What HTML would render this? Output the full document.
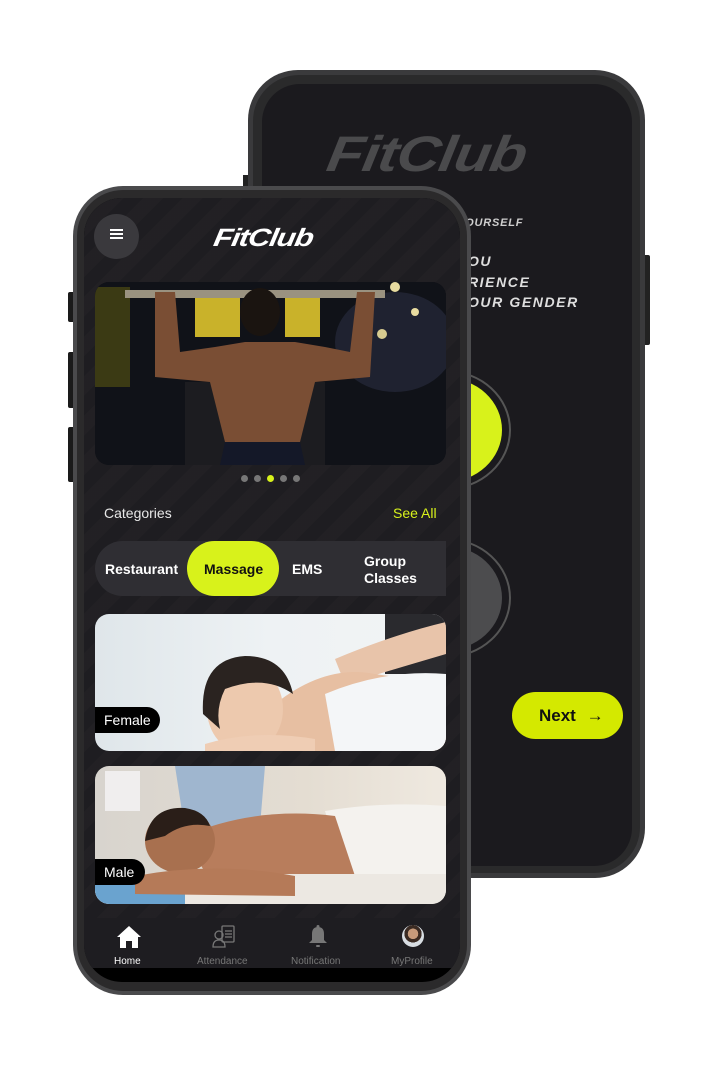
<!DOCTYPE html>
<html><head><meta charset="utf-8">
<style>
*{margin:0;padding:0;box-sizing:border-box}
body{width:728px;height:1072px;background:#fff;position:relative;overflow:hidden;font-family:"Liberation Sans",Arial,sans-serif}
.abs{position:absolute}
.logo{font-family:"Liberation Sans",sans-serif;font-weight:bold;font-style:italic;letter-spacing:-1px;white-space:nowrap;transform-origin:0 0}
</style></head><body>

<!-- BACK PHONE -->
<div class="abs" style="left:645px;top:255px;width:5px;height:90px;background:#222;border-radius:0 2px 2px 0"></div>
<div class="abs" style="left:243px;top:175px;width:6px;height:12px;background:#222"></div>
<div class="abs" style="left:248px;top:70px;width:397px;height:808px;background:#3a3a3c;border-radius:50px;"></div>
<div class="abs" style="left:253px;top:75px;width:387px;height:798px;background:#2a2a2b;border-radius:46px;"></div>
<div class="abs" style="left:262px;top:84px;width:370px;height:782px;background:#1b1a1e;border-radius:38px;overflow:hidden">
  <div class="abs logo" style="left:70px;top:45px;font-size:50px;line-height:50px;color:#4a4a4c;transform:scaleX(1.2) skewX(-8deg)">FitClub</div>
  <div class="abs logo" style="left:195px;top:133px;font-size:11px;color:#cfcfcf;letter-spacing:0.8px">YOURSELF</div>
  <div class="abs logo" style="left:195px;top:167px;font-size:14px;color:#dedede;line-height:20.5px;letter-spacing:1.6px">YOU<br>ERIENCE<br>YOUR GENDER</div>
  <div class="abs" style="left:119px;top:286px;width:130px;height:120px;border-radius:50%;border:2px solid #555;"></div>
  <div class="abs" style="left:128px;top:294px;width:112px;height:104px;border-radius:50%;background:#d8f21b"></div>
  <div class="abs" style="left:119px;top:454px;width:130px;height:120px;border-radius:50%;border:2px solid #555;"></div>
  <div class="abs" style="left:128px;top:462px;width:112px;height:104px;border-radius:50%;background:#4c4c4e"></div>
  <div class="abs" style="left:250px;top:608px;width:111px;height:47px;border-radius:24px;background:#d4e900;color:#111;font-weight:bold;font-size:17px;line-height:47px;padding-left:27px">Next <span style="font-weight:normal;margin-left:6px">→</span></div>
</div>

<!-- FRONT PHONE -->
<div class="abs" style="left:68px;top:292px;width:6px;height:30px;background:#1a1a1a;border-radius:2px 0 0 2px"></div>
<div class="abs" style="left:68px;top:352px;width:6px;height:56px;background:#1a1a1a;border-radius:2px 0 0 2px"></div>
<div class="abs" style="left:68px;top:427px;width:6px;height:55px;background:#1a1a1a;border-radius:2px 0 0 2px"></div>
<div class="abs" style="left:73px;top:186px;width:398px;height:809px;background:#4a4a4c;border-radius:50px;"></div>
<div class="abs" style="left:77px;top:190px;width:390px;height:801px;background:#2b2a2b;border-radius:46px;"></div>
<div class="abs" style="left:84px;top:198px;width:376px;height:784px;background:#000;border-radius:38px;overflow:hidden">
 <div class="abs" style="left:0;top:0;width:376px;height:770px;background:#1e1d21 repeating-linear-gradient(135deg,rgba(255,255,255,0) 0 14px,rgba(255,255,255,0.015) 14px 28px)"></div>
 <div class="abs" style="left:10px;top:16px;width:45px;height:45px;border-radius:50%;background:#3a393d"></div>
 <div class="abs" style="left:26px;top:35px;width:13px;height:2px;background:#fff;box-shadow:0 4px 0 #fff,0 -4px 0 #fff"></div>
 <div class="abs logo" style="left:132px;top:28px;font-size:25px;line-height:25px;color:#fff;transform:scaleX(1.25) skewX(-8deg)">FitClub</div>

 <!-- banner -->
 <div class="abs" style="left:11px;top:84px;width:351px;height:183px;border-radius:14px;overflow:hidden;background:#0d0e14">
  <svg width="351" height="183" viewBox="0 0 351 183">
   <rect width="351" height="183" fill="#101218"/>
   <ellipse cx="300" cy="60" rx="60" ry="50" fill="#1f2230"/>
   <rect x="0" y="5" width="35" height="100" fill="#3b3a14"/>
   <rect x="100" y="10" width="45" height="45" fill="#c9b22a"/>
   <rect x="190" y="10" width="35" height="45" fill="#c9b22a"/>
   <rect x="30" y="8" width="260" height="8" fill="#9a9280"/>
   <circle cx="300" cy="5" r="5" fill="#e8dca0"/><circle cx="320" cy="30" r="4" fill="#e8dca0"/><circle cx="287" cy="52" r="5" fill="#d8cc90"/>
   <rect x="90" y="100" width="140" height="83" fill="#1c1c20"/>
   <path d="M60 10 L80 10 L85 70 L120 65 L150 60 L200 60 L230 65 L255 70 L262 10 L280 10 L275 95 L220 100 L205 160 L130 160 L115 100 L60 95 Z" fill="#7a4e34"/>
   <ellipse cx="165" cy="30" rx="20" ry="24" fill="#1a1410"/>
   <path d="M130 160 L205 160 L210 183 L125 183 Z" fill="#141828"/>
  </svg>
 </div>
 <!-- dots -->
 <div class="abs" style="left:157px;top:277px;width:7px;height:7px;border-radius:50%;background:#777"></div>
 <div class="abs" style="left:170px;top:277px;width:7px;height:7px;border-radius:50%;background:#777"></div>
 <div class="abs" style="left:183px;top:277px;width:7px;height:7px;border-radius:50%;background:#d8f21b"></div>
 <div class="abs" style="left:196px;top:277px;width:7px;height:7px;border-radius:50%;background:#777"></div>
 <div class="abs" style="left:209px;top:277px;width:7px;height:7px;border-radius:50%;background:#777"></div>

 <div class="abs" style="left:20px;top:307px;font-size:14px;color:#e8e8e8">Categories</div>
 <div class="abs" style="left:309px;top:307px;font-size:14px;color:#d8f21b">See All</div>

 <div class="abs" style="left:11px;top:343px;width:351px;height:55px;border-radius:28px 0 0 28px;background:#2f2e33"></div>
 <div class="abs" style="left:103px;top:343px;width:92px;height:55px;border-radius:28px;background:#d8f21b"></div>
 <div class="abs" style="left:21px;top:363px;font-size:14px;font-weight:bold;color:#fff">Restaurant</div>
 <div class="abs" style="left:120px;top:363px;font-size:14px;font-weight:bold;color:#111">Massage</div>
 <div class="abs" style="left:208px;top:363px;font-size:14px;font-weight:bold;color:#fff">EMS</div>
 <div class="abs" style="left:280px;top:355px;font-size:14px;font-weight:bold;color:#fff;line-height:17px">Group<br>Classes</div>

 <!-- female card -->
 <div class="abs" style="left:11px;top:416px;width:351px;height:137px;border-radius:14px;overflow:hidden;background:linear-gradient(90deg,#dfe6ea,#eef2f4 50%,#f2f4f5)">
  <svg width="351" height="137" viewBox="0 0 351 137">
   <rect x="290" y="0" width="61" height="60" fill="#2a2a2e"/>
   <path d="M240 45 Q300 20 351 8 L351 40 Q300 55 250 70 Z" fill="#e8c4aa"/>
   <path d="M180 90 Q230 50 280 60 L351 70 L351 137 L140 137 Z" fill="#e7bfa2"/>
   <path d="M230 80 Q290 55 351 60 L351 137 L240 137 Z" fill="#f4f6f8"/>
   <ellipse cx="150" cy="95" rx="38" ry="44" fill="#edc9ae"/>
   <path d="M108 100 Q105 45 150 42 Q190 42 198 80 Q170 60 130 75 Q120 95 125 115 Z" fill="#2a2320"/>
   <path d="M110 130 Q160 115 220 125 L220 137 L110 137 Z" fill="#efcdb4"/>
  </svg>
  <div class="abs" style="left:0;top:93px;width:65px;height:26px;border-radius:0 13px 13px 0;background:#000;color:#fff;font-size:14px;line-height:26px;padding-left:9px">Female</div>
 </div>

 <!-- male card -->
 <div class="abs" style="left:11px;top:568px;width:351px;height:138px;border-radius:14px;overflow:hidden;background:linear-gradient(90deg,#d8d4ce,#e4ddd2 60%,#efe9e0)">
  <svg width="351" height="138" viewBox="0 0 351 138">
   <rect x="10" y="5" width="35" height="40" fill="#f0eeee"/>
   <path d="M80 0 L170 0 L165 60 L90 65 Z" fill="#9fb6cf"/>
   <path d="M230 45 Q290 35 351 40 L351 110 L250 110 Z" fill="#f4f2ee"/>
   <path d="M90 70 Q160 40 240 50 L260 110 L120 125 Z" fill="#b87d5c"/>
   <rect x="0" y="108" width="351" height="30" fill="#ece8e2"/>
   <rect x="0" y="118" width="90" height="20" fill="#6aa3cf"/>
   <ellipse cx="85" cy="75" rx="35" ry="32" fill="#a8704f"/>
   <path d="M50 75 Q55 40 90 42 Q110 45 115 60 Q90 55 70 70 Z" fill="#2a1e18"/>
   <path d="M40 110 Q120 95 200 110 L200 130 L40 128 Z" fill="#b57a58"/>
  </svg>
  <div class="abs" style="left:0;top:93px;width:50px;height:26px;border-radius:0 13px 13px 0;background:#000;color:#fff;font-size:14px;line-height:26px;padding-left:9px">Male</div>
 </div>

 <!-- bottom nav -->
 <div class="abs" style="left:0;top:720px;width:376px;height:50px;background:#1e1d21"></div>
 <svg class="abs" style="left:32px;top:727px" width="26" height="24" viewBox="0 0 26 24"><path d="M13 1 L25 12 L22 12 L22 23 L16 23 L16 16 L10 16 L10 23 L4 23 L4 12 L1 12 Z" fill="#fff"/></svg>
 <svg class="abs" style="left:127px;top:726px" width="26" height="26" viewBox="0 0 26 26" fill="none" stroke="#777" stroke-width="1.3"><rect x="11" y="2" width="12" height="16" rx="1"/><line x1="14" y1="7" x2="21" y2="7"/><line x1="14" y1="10" x2="21" y2="10"/><line x1="14" y1="13" x2="21" y2="13"/><circle cx="8" cy="11" r="4"/><path d="M2 23 Q2 16 8 16 Q14 16 14 23 Z"/></svg>
 <svg class="abs" style="left:224px;top:726px" width="20" height="26" viewBox="0 0 20 26"><path d="M10 3 Q16 3 16 10 L16 16 L19 19 L1 19 L4 16 L4 10 Q4 3 10 3 Z" fill="#777"/><circle cx="10" cy="2.5" r="1.5" fill="#777"/><rect x="8" y="21" width="4" height="2" rx="1" fill="#777"/></svg>
 <div class="abs" style="left:318px;top:727px;width:22px;height:22px;border-radius:50%;background:radial-gradient(circle at 50% 40%,#c79a7a 0 30%,#3a2a22 31% 50%,#d8dde2 51%)"></div>
 <div class="abs" style="left:30px;top:758px;font-size:10px;color:#fff">Home</div>
 <div class="abs" style="left:113px;top:758px;font-size:10px;color:#777">Attendance</div>
 <div class="abs" style="left:207px;top:758px;font-size:10px;color:#777">Notification</div>
 <div class="abs" style="left:307px;top:758px;font-size:10px;color:#777">MyProfile</div>
</div>

</body></html>
